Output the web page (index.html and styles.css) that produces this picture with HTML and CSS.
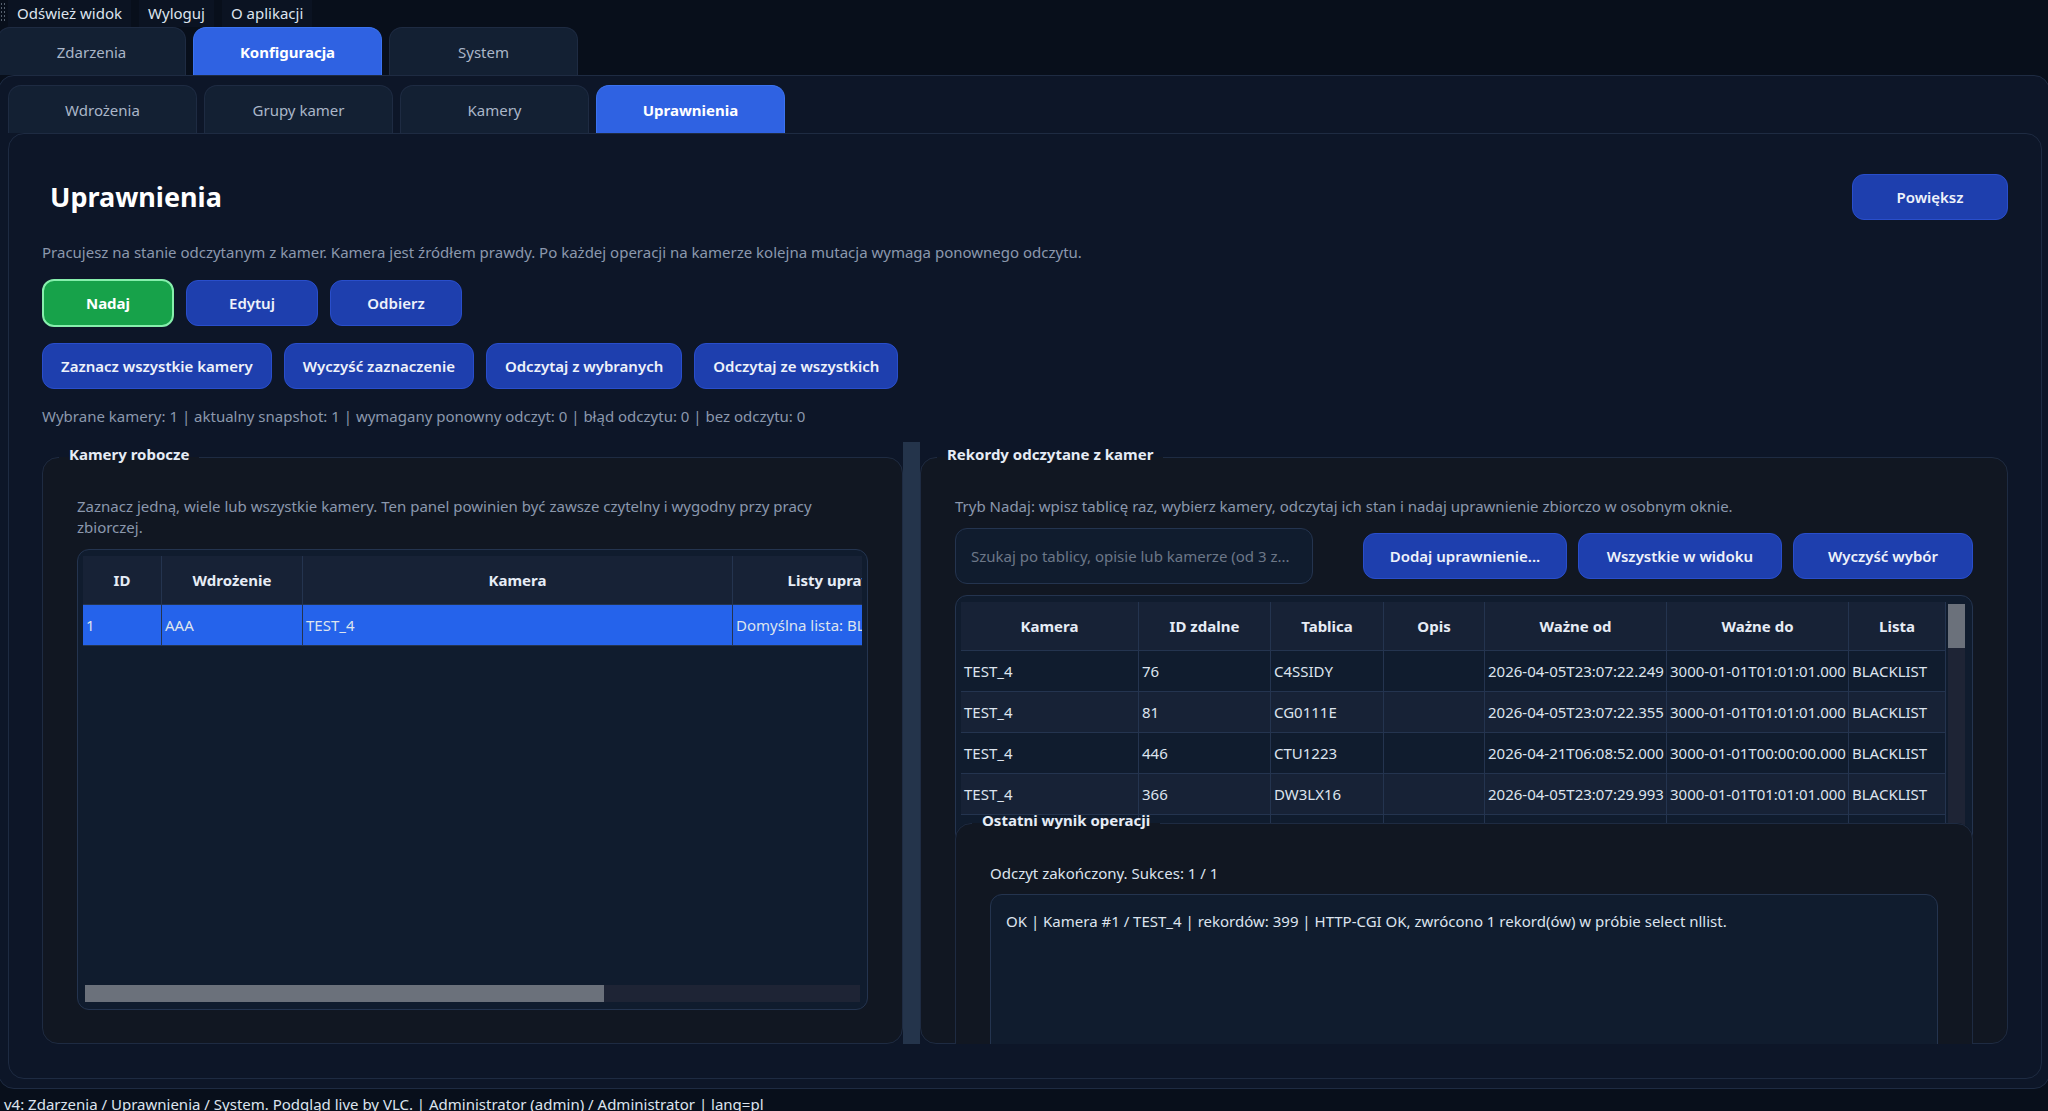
FILE: index.html
```html
<!DOCTYPE html>
<html lang="pl">
<head>
    <meta charset="UTF-8">
    <meta name="viewport" content="width=device-width, initial-scale=1.0">
    <title>Uprawnienia</title>
    <link rel="stylesheet" href="styles.css">
</head>
<body>

<div class="toolbar" role="toolbar" aria-label="Menu">
    <span class="grip"></span>
    <button type="button">Odśwież widok</button>
    <button type="button">Wyloguj</button>
    <button type="button">O aplikacji</button>
</div>

<div class="tabs main-tabs" role="tablist">
    <button class="tab" role="tab">Zdarzenia</button>
    <button class="tab active" role="tab" aria-selected="true">Konfiguracja</button>
    <button class="tab" role="tab">System</button>
</div>

<div class="pane outer-pane">
    <div class="tabs" role="tablist">
        <button class="tab" role="tab">Wdrożenia</button>
        <button class="tab" role="tab">Grupy kamer</button>
        <button class="tab" role="tab">Kamery</button>
        <button class="tab active" role="tab" aria-selected="true">Uprawnienia</button>
    </div>

    <main class="pane inner-pane">
        <header class="page-header">
            <h1>Uprawnienia</h1>
            <button class="btn btn-zoom" type="button">Powiększ</button>
        </header>
        <p class="hint intro">Pracujesz na stanie odczytanym z kamer. Kamera jest źródłem prawdy. Po każdej operacji na kamerze kolejna mutacja wymaga ponownego odczytu.</p>

        <div class="btn-row mode-row">
            <button class="btn btn-mode btn-green" type="button">Nadaj</button>
            <button class="btn btn-mode" type="button">Edytuj</button>
            <button class="btn btn-mode" type="button">Odbierz</button>
        </div>
        <div class="btn-row select-row">
            <button class="btn" type="button">Zaznacz wszystkie kamery</button>
            <button class="btn" type="button">Wyczyść zaznaczenie</button>
            <button class="btn" type="button">Odczytaj z wybranych</button>
            <button class="btn" type="button">Odczytaj ze wszystkich</button>
        </div>
        <p class="hint summary">Wybrane kamery: 1 | aktualny snapshot: 1 | wymagany ponowny odczyt: 0 | błąd odczytu: 0 | bez odczytu: 0</p>

        <div class="splitter">
            <fieldset class="group">
                <legend>Kamery robocze</legend>
                <p class="hint">Zaznacz jedną, wiele lub wszystkie kamery. Ten panel powinien być zawsze czytelny i wygodny przy pracy zbiorczej.</p>
                <div class="table-box cameras-box">
                    <div class="table-view">
                        <table class="cameras">
                            <colgroup>
                                <col class="c-id"><col class="c-deploy"><col class="c-camera"><col class="c-lists">
                            </colgroup>
                            <thead>
                                <tr><th>ID</th><th>Wdrożenie</th><th>Kamera</th><th>Listy uprawnień</th></tr>
                            </thead>
                            <tbody>
                                <tr class="selected"><td>1</td><td>AAA</td><td>TEST_4</td><td>Domyślna lista: BLACKLIST</td></tr>
                            </tbody>
                        </table>
                    </div>
                    <div class="scroll-x"><div class="thumb"></div></div>
                </div>
            </fieldset>

            <div class="handle"></div>

            <fieldset class="group">
                <legend>Rekordy odczytane z kamer</legend>
                <p class="hint">Tryb Nadaj: wpisz tablicę raz, wybierz kamery, odczytaj ich stan i nadaj uprawnienie zbiorczo w osobnym oknie.</p>
                <div class="search-row">
                    <input class="search" type="text" aria-label="Szukaj" placeholder="Szukaj po tablicy, opisie lub kamerze (od 3 z...">
                    <button class="btn btn-wide" type="button">Dodaj uprawnienie...</button>
                    <button class="btn btn-wide" type="button">Wszystkie w widoku</button>
                    <button class="btn btn-clear" type="button">Wyczyść wybór</button>
                </div>
                <div class="table-box records-box">
                    <div class="table-view">
                        <table class="records">
                            <colgroup>
                                <col><col class="c-remote"><col class="c-plate"><col class="c-desc"><col class="c-date"><col class="c-date"><col class="c-list">
                            </colgroup>
                            <thead>
                                <tr><th>Kamera</th><th>ID zdalne</th><th>Tablica</th><th>Opis</th><th>Ważne od</th><th>Ważne do</th><th>Lista</th></tr>
                            </thead>
                            <tbody>
                                <tr><td>TEST_4</td><td>76</td><td>C4SSIDY</td><td></td><td>2026-04-05T23:07:22.249</td><td>3000-01-01T01:01:01.000</td><td>BLACKLIST</td></tr>
                                <tr><td>TEST_4</td><td>81</td><td>CG0111E</td><td></td><td>2026-04-05T23:07:22.355</td><td>3000-01-01T01:01:01.000</td><td>BLACKLIST</td></tr>
                                <tr><td>TEST_4</td><td>446</td><td>CTU1223</td><td></td><td>2026-04-21T06:08:52.000</td><td>3000-01-01T00:00:00.000</td><td>BLACKLIST</td></tr>
                                <tr><td>TEST_4</td><td>366</td><td>DW3LX16</td><td></td><td>2026-04-05T23:07:29.993</td><td>3000-01-01T01:01:01.000</td><td>BLACKLIST</td></tr>
                                <tr><td></td><td></td><td></td><td></td><td></td><td></td><td></td></tr>
                            </tbody>
                        </table>
                    </div>
                    <div class="scroll-y"><div class="thumb"></div></div>
                </div>

                <fieldset class="group result">
                    <legend>Ostatni wynik operacji</legend>
                    <label for="log">Odczyt zakończony. Sukces: 1 / 1</label>
                    <textarea id="log" readonly>OK | Kamera #1 / TEST_4 | rekordów: 399 | HTTP-CGI OK, zwrócono 1 rekord(ów) w próbie select nllist.</textarea>
                </fieldset>
            </fieldset>
        </div>
    </main>
</div>

<footer class="status">v4: Zdarzenia / Uprawnienia / System. Podgląd live by VLC. | Administrator (admin) / Administrator | lang=pl</footer>

</body>
</html>
```
FILE: styles.css
```css
:root {
    --bg: #080f1b;
    --pane: #0d1628;
    --group: #111722;
    --field: #101c2e;
    --raised: #172236;
    --border: #1e2b42;
    --border-light: #24344f;
    --blue: #1e3fae;
    --text: #dde4ee;
    --muted: #8b98ad;
}

* {
    margin: 0;
    padding: 0;
    box-sizing: border-box;
}

body {
    height: 100vh;
    overflow: hidden;
    display: flex;
    flex-direction: column;
    background: var(--bg);
    color: var(--text);
}

body, button, input, textarea {
    font-family: "Noto Sans", "Open Sans", sans-serif;
    font-size: 15px;
    line-height: 20px;
}

/* top toolbar */
.toolbar {
    display: flex;
    flex: none;
    gap: 8px;
    height: 27px;
}

.toolbar button {
    background: #0b1322;
    border: none;
    color: var(--text);
    padding: 3px 9px 4px;
}

.grip {
    width: 5px;
    margin: 2px -5px 4px 0;
    background: radial-gradient(circle, #56606e 1px, transparent 1px) 0 0 / 3px 4px;
}

/* tabs */
.tabs {
    display: flex;
    flex: none;
    gap: 7px;
}

.main-tabs {
    margin-left: -3px;
}

.tab {
    width: 189px;
    height: 48px;
    border: 1px solid var(--border);
    border-bottom: none;
    border-radius: 13px 13px 0 0;
    background: #132033;
    color: #aab6c8;
}

.tab.active {
    background: #2f62e2;
    border-color: #3b73f0;
    color: #fff;
    font-weight: 700;
}

.pane {
    flex: 1;
    min-height: 0;
    display: flex;
    flex-direction: column;
    border: 1px solid var(--border);
    border-radius: 16px;
    background: var(--pane);
}

.outer-pane {
    margin: 0 -2px;
    padding: 9px 7px 9px 9px;
}

.inner-pane {
    padding: 40px 33px 34px;
}

/* page header */
.page-header {
    display: flex;
    justify-content: space-between;
    align-items: center;
}

h1 {
    padding-left: 8px;
    font-size: 27px;
    line-height: 40px;
    color: #fff;
}

.hint {
    line-height: 21px;
    color: var(--muted);
}

.intro {
    margin-top: 22px;
}

.btn {
    height: 46px;
    padding: 0 18px;
    border: 1px solid #294ecb;
    border-radius: 12px;
    background: var(--blue);
    color: #eef2fa;
    font-weight: 600;
    white-space: nowrap;
}

.btn-zoom {
    width: 156px;
}

.btn-mode {
    width: 132px;
}

.btn-green {
    height: 48px;
    border: 2px solid #86efac;
    background: #17a24a;
    color: #fff;
    font-weight: 700;
}

.btn-row {
    display: flex;
    align-items: center;
    gap: 12px;
}

.mode-row {
    margin-top: 16px;
}

.select-row {
    margin-top: 16px;
}

.summary {
    margin-top: 17px;
}

/* split view */
.splitter {
    flex: 1;
    min-height: 0;
    margin-top: 15px;
    display: grid;
    grid-template-columns: minmax(0, 861fr) 17px minmax(0, 1088fr);
    grid-template-rows: minmax(0, 1fr);
    overflow: hidden;
}

.handle {
    background: #24344b;
}

.group {
    min-width: 0;
    min-height: 0;
    display: flex;
    flex-direction: column;
    padding: 24px 34px 33px;
    border: 1px solid var(--border);
    border-radius: 16px;
    background: var(--group);
}

.group legend {
    margin-left: -18px;
    padding: 0 10px 6px;
    line-height: 24px;
    font-weight: 700;
    color: #e6ecf5;
}

/* tables */
.table-box {
    display: flex;
    margin-top: 11px;
    padding: 6px 5px 5px;
    border: 1px solid var(--border-light);
    border-radius: 12px;
    background: var(--field);
}

.cameras-box {
    flex: 1;
    min-height: 0;
    flex-direction: column;
    padding-bottom: 7px;
}

.records-box {
    flex: none;
    height: 255px;
}

.table-view {
    flex: 1;
    min-width: 0;
    overflow: hidden;
}

table {
    table-layout: fixed;
    border-collapse: separate;
    border-spacing: 0;
}

th, td {
    border-right: 1px solid var(--border-light);
    border-bottom: 1px solid var(--border-light);
    white-space: nowrap;
    overflow: hidden;
}

th {
    height: 49px;
    background: var(--raised);
    font-weight: 700;
    color: #e6ecf5;
}

td {
    height: 41px;
    padding-left: 3px;
}

.cameras {
    width: 880px;
}

.records {
    width: 100%;
}

.records tbody tr:nth-child(even) {
    background: var(--raised);
}

.selected {
    background: #2563eb;
}

.c-id { width: 79px; }
.c-deploy { width: 141px; }
.c-lists { width: 230px; }
.c-remote { width: 132px; }
.c-plate { width: 113px; }
.c-desc { width: 101px; }
.c-date { width: 182px; }
.c-list { width: 97px; }

.scroll-x {
    height: 17px;
    margin: 0 2px;
    background: #1e2435;
}

.scroll-y {
    width: 17px;
    margin: 2px 2px 0;
    background: #1e2435;
}

.thumb {
    background: #6b717b;
}

.scroll-x .thumb {
    width: 67%;
    height: 100%;
}

.scroll-y .thumb {
    height: 44px;
}

/* search */
.search-row {
    display: flex;
    align-items: center;
    gap: 11px;
    margin-top: 11px;
}

.search {
    flex: 1;
    min-width: 0;
    height: 56px;
    margin-right: 39px;
    padding: 0 15px;
    border: 1px solid var(--border-light);
    border-radius: 12px;
    background: var(--field);
    color: var(--text);
}

.search::placeholder {
    color: #6c7788;
}

.btn-wide {
    width: 204px;
}

.btn-clear {
    width: 180px;
}

/* result box slides over the bottom of the records table */
.result {
    flex: none;
    margin-top: -42px;
    padding-top: 25px;
    z-index: 1;
}

.result textarea {
    height: 200px;
    margin-top: 11px;
    padding: 16px 15px;
    border: 1px solid var(--border-light);
    border-radius: 12px;
    background: var(--field);
    color: var(--text);
    resize: none;
}

.status {
    flex: none;
    height: 22px;
    padding: 5px 4px 0;
    white-space: nowrap;
}
```
